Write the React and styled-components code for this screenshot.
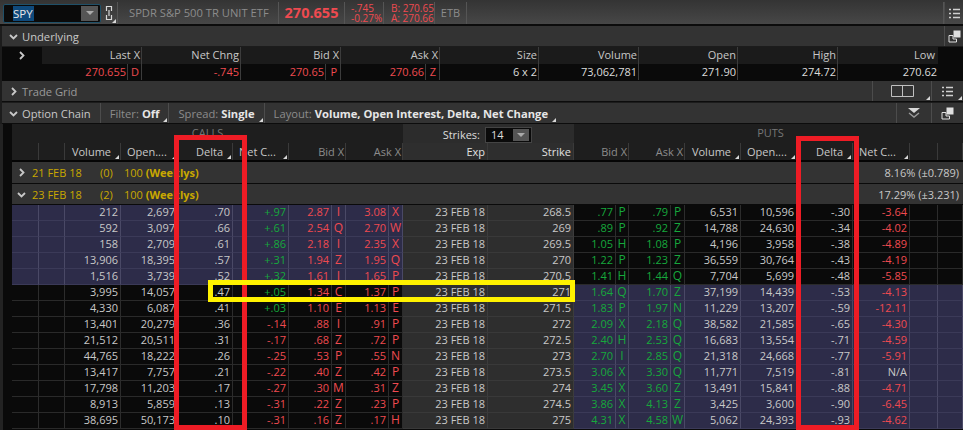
import React from "react";
import styled, { createGlobalStyle } from "styled-components";

const GlobalStyles = createGlobalStyle`
  html, body {
    margin: 0;
    padding: 0;
    background: #1a1a1a;
    overflow: hidden;
  }
  * { box-sizing: border-box; }
`;

const RED = "#ef4a50";
const GREEN = "#16a83c";
const LIGHT = "#c8c8c8";

const Page = styled.div`
  position: relative;
  width: 963px;
  height: 430px;
  overflow: hidden;
  background: #1c1c1c;
  font-family: "Open Sans", "Liberation Sans", sans-serif;
  font-size: 11px;
  color: ${LIGHT};
  padding-left: 2px;
`;

// top symbol bar
const Toolbar = styled.div`
  display: flex;
  align-items: center;
  height: 26px;
  margin-left: -2px;
  padding-top: 2px;
  background: linear-gradient(#343434, #474747);
  border-bottom: 2px solid #0c0c0c;
`;
const SymbolBox = styled.div`
  display: flex;
  align-items: center;
  justify-content: space-between;
  width: 98px;
  height: 19px;
  margin-left: 3px;
  padding: 0 2px 0 9px;
  background: #0a0a0a;
  border: 1px solid #1f5068;
  border-radius: 2px;
`;
const SymbolText = styled.span`
  background: #0f4a7c;
  color: #e8e8e8;
  font-size: 11.5px;
  line-height: 15px;
  padding-right: 1px;
`;
const ComboArrow = styled.span`
  display: flex;
  align-items: center;
  justify-content: center;
  width: 17px;
  height: 15px;
  background: #555;
  &::after {
    content: "";
    border-left: 4px solid transparent;
    border-right: 4px solid transparent;
    border-top: 4px solid #aaa;
  }
`;
const ToolCell = styled.div`
  position: relative;
  display: flex;
  flex-direction: ${(p) => (p.$stack ? "column" : "row")};
  align-items: ${(p) => (p.$stack ? "flex-start" : "center")};
  justify-content: center;
  width: ${(p) => p.$w}px;
  height: 22px;
  padding-left: ${(p) => p.$pad || 0}px;
  border-right: 1px solid #555;
  color: ${(p) => p.$color || "#8c8c8c"};
  font-size: ${(p) => p.$size || 11}px;
  line-height: 10px;
  flex: ${(p) => (p.$grow ? 1 : "none")};
  ${(p) => (p.$left ? "justify-content: flex-start;" : "")}
`;
const LastPrice = styled.span`
  color: ${RED};
  font-size: 14.5px;
  font-weight: 700;
`;
const Corner = styled.span`
  position: absolute;
  right: 1px;
  bottom: 1px;
  width: 0;
  height: 0;
  border-left: 4px solid transparent;
  border-bottom: 4px solid #d8d8d8;
`;

// collapsible section bars
const Bar = styled.div`
  display: flex;
  align-items: center;
  height: ${(p) => p.$h || 20}px;
  background: #333;
  border-bottom: ${(p) => (p.$line ? "1px solid #0c0c0c" : "none")};
  margin-top: ${(p) => p.$mt || 0}px;
  margin-bottom: ${(p) => p.$mb || 0}px;
  color: ${(p) => p.$color || LIGHT};
  font-size: 11.2px;
`;
const Arrow = styled.svg`
  width: 9px;
  height: 9px;
  margin: 0 ${(p) => p.$mr ?? 4}px 0 ${(p) => p.$ml ?? 7}px;
  flex: none;
`;
const BarTitle = styled.span`
  padding-right: 9px;
`;
const BarRight = styled.div`
  display: flex;
  align-items: center;
  margin-left: auto;
  height: 100%;
`;
const BarButton = styled.div`
  position: relative;
  display: flex;
  align-items: center;
  justify-content: center;
  width: ${(p) => p.$w}px;
  height: 100%;
  border-left: 1px solid #4c4c4c;
`;
const BarItem = styled.div`
  position: relative;
  display: flex;
  align-items: center;
  gap: 3px;
  height: 100%;
  padding: 0 9px;
  border-left: 1px solid #4c4c4c;
  color: #8c8c8c;
  font-size: 11.2px;
  b {
    color: #e6e6e6;
    font-weight: 700;
  }
`;

// underlying quote
const QuoteGrid = styled.div`
  display: grid;
  grid-template-columns: 40px 86px 14px 99px 85px 15px 85px 14px 99px 100px 99px 100px 100px 1fr;
  height: 17px;
  background: #0a0a0a;
`;
const QuoteCell = styled.div`
  position: relative;
  grid-column: span ${(p) => p.$span || 1};
  text-align: right;
  height: ${(p) => (p.$head ? 17 : 16)}px;
  line-height: ${(p) => (p.$head ? 15 : 16)}px;
  padding-right: ${(p) => p.$pad ?? 1}px;
  color: ${(p) => p.$color || LIGHT};
  background: ${(p) => (p.$head ? "#1b1b1b" : "transparent")};
  border-right: ${(p) => (p.$noline ? "none" : "1px solid #3c3c3c")};
`;
const QuoteToggle = styled.div`
  grid-row: span 2;
  display: flex;
  align-items: center;
  padding-left: 15px;
`;

// chain
const ChainWrap = styled.div`
  background: #0a0a0a;
  margin-left: -2px;
  padding-left: 9px;
  border-left: 3px solid #232323;
  height: 307px;
`;
const TitleRow = styled.div`
  display: grid;
  grid-template-columns: 391px 171px 1fr;
  height: 19px;
  background: #1e1e1e;
`;
const SideTitle = styled.div`
  text-align: center;
  line-height: 17px;
  color: #777;
  padding-left: ${(p) => p.$pad || 0}px;
`;
const StrikesBox = styled.div`
  display: flex;
  align-items: center;
  justify-content: flex-end;
  gap: 5px;
  padding: 2px 42px 0 0;
  background: #2c2c2c;
  color: #ddd;
`;
const StrikesCombo = styled.div`
  display: flex;
  align-items: center;
  justify-content: space-between;
  flex: none;
  width: 47px;
  height: 16px;
  padding: 0 2px 0 5px;
  background: #0a0a0a;
  border: 1px solid #444;
  color: #ddd;
`;
const StrikesArrow = styled(ComboArrow)`
  width: 16px;
  height: 12px;
`;

const COLUMNS =
  "27px 26px 56px 57px 55px 56px 43px 14px 43px 14px 85px 86px 42px 13px 42px 14px 56px 56px 56px 57px 28px 1fr";

const HeadRow = styled.div`
  display: grid;
  grid-template-columns: ${COLUMNS};
  height: 19px;
  background: #1e1e1e;
  border-bottom: 2px solid #050505;
`;
const HeadCell = styled.div`
  position: relative;
  grid-column: span ${(p) => p.$span || 1};
  text-align: ${(p) => (p.$left ? "left" : "right")};
  line-height: 17px;
  padding: ${(p) => (p.$left ? "0 0 0 6px" : `0 ${p.$pad ?? 2}px 0 0`)};
  color: ${(p) => p.$color || "#c8c8c8"};
  background: ${(p) => p.$bg || "transparent"};
  border-right: 1px solid #3a3a3a;
  white-space: nowrap;
`;
const GroupRow = styled.div`
  display: flex;
  align-items: center;
  height: ${(p) => p.$h}px;
  margin-bottom: 1px;
  background: #333;
  color: #c9a800;
`;
const GroupDate = styled.span`
  width: 68px;
`;
const GroupCount = styled.span`
  width: 24px;
`;
const GroupRight = styled.span`
  margin-left: auto;
  padding-right: 4px;
  color: ${LIGHT};
`;
const DataRow = styled.div`
  display: grid;
  grid-template-columns: ${COLUMNS};
  height: 16px;
`;
const Cell = styled.div`
  text-align: ${(p) => (p.$center ? "center" : "right")};
  font-size: ${(p) => (p.$center ? 12 : 11)}px;
  line-height: 14px;
  padding-right: ${(p) => (p.$center ? 0 : 2)}px;
  color: ${(p) => p.$color || LIGHT};
  background: ${(p) => (p.$mid ? "#2e2e2e" : p.$itm ? "#2d2c49" : "#0a0a0a")};
  border-right: 1px solid ${(p) => (p.$mid ? "#3c3c3c" : p.$itm ? "#4a4966" : "#2c2c2c")};
  border-bottom: 1px solid ${(p) => (p.$mid ? "#393939" : p.$itm ? "#3b3a58" : "#2a2a2a")};
  white-space: nowrap;
`;

// hand drawn marks over the screenshot
const Mark = styled.div`
  position: absolute;
  left: ${(p) => p.$x}px;
  top: ${(p) => p.$y}px;
  width: ${(p) => p.$w}px;
  height: ${(p) => p.$h}px;
  border: ${(p) => p.$t}px solid ${(p) => p.$c};
  pointer-events: none;
`;

const Chevron = ({ open, ml, mr }) => (
  <Arrow viewBox="0 0 9 9" $ml={ml} $mr={mr}>
    <path
      d={open ? "M1 3l3.5 3.5L8 3" : "M3 1l3.5 3.5L3 8"}
      fill="none"
      stroke="#c8c8c8"
      strokeWidth="1.8"
    />
  </Arrow>
);

const ListIcon = () => (
  <svg width="11" height="11" viewBox="0 0 11 11">
    <path
      d="M0 1.5h2M4 1.5h7M0 5.5h2M4 5.5h7M0 9.5h2M4 9.5h7"
      stroke="#d0d0d0"
      strokeWidth="1.4"
    />
  </svg>
);

const DetachIcon = () => (
  <svg width="13" height="13" viewBox="0 0 13 13">
    <path d="M1 5.5h4V9h3.5v3H1z" fill="none" stroke="#e0e0e0" strokeWidth="1" />
    <rect x="5.5" y="0.5" width="7" height="7" fill="#e0e0e0" />
  </svg>
);

const LinkIcon = () => (
  <svg width="8" height="16" viewBox="0 0 8 16">
    <path
      d="M1.5 6V1.5h5V6M1.5 10v4.5h5V10M4 5v6"
      fill="none"
      stroke="#d8d8d8"
      strokeWidth="1.2"
    />
  </svg>
);

const SplitIcon = () => (
  <svg width="23" height="12" viewBox="0 0 23 12">
    <path d="M.5.5h22v11H.5zM11.5.5v11" fill="none" stroke="#c0c0c0" strokeWidth="1" />
  </svg>
);

const DoubleDown = () => (
  <svg width="12" height="10" viewBox="0 0 12 10">
    <path d="M0 0h12L6 5z" fill="#d8d8d8" />
    <path d="M1 5l5 4 5-4" fill="none" stroke="#9a9a9a" strokeWidth="1.4" />
  </svg>
);

// vol, oi, delta, net, bid, x, ask, x, strike, bid, x, ask, x, vol, oi, delta, net
const rows = [
  ["212", "2,697", ".70", "+.97", "2.87", "I", "3.08", "X", "268.5", ".77", "P", ".79", "P", "6,531", "10,596", "-.30", "-3.64"],
  ["592", "3,097", ".66", "+.61", "2.54", "Q", "2.70", "W", "269", ".89", "P", ".92", "Z", "14,788", "24,630", "-.34", "-4.02"],
  ["158", "2,709", ".61", "+.86", "2.18", "I", "2.35", "X", "269.5", "1.05", "H", "1.08", "P", "4,196", "3,958", "-.38", "-4.89"],
  ["13,906", "18,395", ".57", "+.31", "1.94", "Z", "1.95", "Q", "270", "1.22", "P", "1.23", "Z", "36,559", "30,764", "-.43", "-4.19"],
  ["1,516", "3,739", ".52", "+.32", "1.61", "I", "1.65", "P", "270.5", "1.41", "H", "1.44", "Q", "7,704", "5,699", "-.48", "-5.85"],
  ["3,995", "14,057", ".47", "+.05", "1.34", "C", "1.37", "P", "271", "1.64", "Q", "1.70", "Z", "37,199", "14,439", "-.53", "-4.13"],
  ["4,330", "6,087", ".41", "+.03", "1.10", "E", "1.13", "E", "271.5", "1.83", "P", "1.97", "N", "11,229", "13,207", "-.59", "-12.11"],
  ["13,401", "20,279", ".36", "-.14", ".88", "I", ".91", "P", "272", "2.09", "X", "2.18", "Q", "38,582", "21,585", "-.65", "-4.30"],
  ["21,512", "20,511", ".31", "-.17", ".68", "Z", ".72", "P", "272.5", "2.40", "H", "2.53", "Q", "16,683", "13,554", "-.71", "-4.59"],
  ["44,765", "18,222", ".26", "-.25", ".53", "P", ".55", "N", "273", "2.70", "I", "2.85", "Q", "21,318", "24,668", "-.77", "-5.91"],
  ["13,417", "7,757", ".21", "-.22", ".40", "Z", ".42", "P", "273.5", "3.06", "X", "3.30", "Q", "11,771", "7,519", "-.81", "N/A"],
  ["17,798", "11,203", ".17", "-.27", ".30", "M", ".31", "Z", "274", "3.45", "X", "3.60", "Z", "13,491", "15,841", "-.88", "-4.71"],
  ["8,913", "5,859", ".13", "-.31", ".22", "Z", ".23", "P", "274.5", "3.86", "X", "4.13", "Z", "3,425", "3,600", "-.90", "-6.45"],
  ["38,695", "50,173", ".10", "-.31", ".16", "Z", ".17", "H", "275", "4.31", "X", "4.58", "W", "5,062", "24,393", "-.93", "-4.62"],
];

const OptionRow = ({ row, index }) => {
  const [vol, oi, delta, net, bid, bx, ask, ax, strike, pBid, pbx, pAsk, pax, pVol, pOi, pDelta, pNet] = row;
  const call = index < 5;
  const put = index >= 5;
  return (
    <DataRow>
      <Cell $itm={call} />
      <Cell $itm={call} />
      <Cell $itm={call}>{vol}</Cell>
      <Cell $itm={call}>{oi}</Cell>
      <Cell $itm={call}>{delta}</Cell>
      <Cell $itm={call} $color={net[0] === "+" ? GREEN : RED}>{net}</Cell>
      <Cell $itm={call} $color={RED}>{bid}</Cell>
      <Cell $itm={call} $color={RED} $center>{bx}</Cell>
      <Cell $itm={call} $color={RED}>{ask}</Cell>
      <Cell $itm={call} $color={RED} $center>{ax}</Cell>
      <Cell $mid>23 FEB 18</Cell>
      <Cell $mid>{strike}</Cell>
      <Cell $itm={put} $color={GREEN}>{pBid}</Cell>
      <Cell $itm={put} $color={GREEN} $center>{pbx}</Cell>
      <Cell $itm={put} $color={GREEN}>{pAsk}</Cell>
      <Cell $itm={put} $color={GREEN} $center>{pax}</Cell>
      <Cell $itm={put}>{pVol}</Cell>
      <Cell $itm={put}>{pOi}</Cell>
      <Cell $itm={put}>{pDelta}</Cell>
      <Cell $itm={put} $color={pNet === "N/A" ? LIGHT : RED}>{pNet}</Cell>
      <Cell $itm={put} />
      <Cell $itm={put} />
    </DataRow>
  );
};

const Sortable = ({ children, left }) => (
  <HeadCell $left={left} $pad={9}>
    {children}
    <Corner />
  </HeadCell>
);

export default function App() {
  return (
    <Page>
      <GlobalStyles />
      <Toolbar>
        <SymbolBox>
          <SymbolText>SPY</SymbolText>
          <ComboArrow />
        </SymbolBox>
        <ToolCell $w={17}>
          <LinkIcon />
          <Corner />
        </ToolCell>
        <ToolCell $w={161} $pad={11} $left $size={11.2}>SPDR S&amp;P 500 TR UNIT ETF</ToolCell>
        <ToolCell $w={66}><LastPrice>270.655</LastPrice></ToolCell>
        <ToolCell $w={39} $stack $pad={6} $color={RED} $size={10}>
          <span>-.745</span>
          <span>-0.27%</span>
        </ToolCell>
        <ToolCell $w={51} $stack $pad={7} $color={RED} $size={10}>
          <span>B: 270.65</span>
          <span>A: 270.66</span>
        </ToolCell>
        <ToolCell $w={32}>ETB</ToolCell>
        <ToolCell $grow />
        <BarButton $w={19}><ListIcon /></BarButton>
      </Toolbar>

      <Bar $h={20} $mb={1}>
        <Chevron open />
        Underlying
        <BarRight>
          <BarButton $w={19}><DetachIcon /></BarButton>
        </BarRight>
      </Bar>
      <QuoteGrid>
        <QuoteToggle><Chevron ml={0} /></QuoteToggle>
        <QuoteCell $head $span={2}>Last X</QuoteCell>
        <QuoteCell $head>Net Chng</QuoteCell>
        <QuoteCell $head $span={2}>Bid X</QuoteCell>
        <QuoteCell $head $span={2}>Ask X</QuoteCell>
        <QuoteCell $head>Size</QuoteCell>
        <QuoteCell $head>Volume</QuoteCell>
        <QuoteCell $head>Open</QuoteCell>
        <QuoteCell $head>High</QuoteCell>
        <QuoteCell $head $noline $pad={3}>Low</QuoteCell>
      </QuoteGrid>
      <QuoteGrid>
        <span />
        <QuoteCell $color={RED}>270.655</QuoteCell>
        <QuoteCell $color={RED} $pad={2}>D</QuoteCell>
        <QuoteCell $color={RED}>-.745</QuoteCell>
        <QuoteCell $color={RED}>270.65</QuoteCell>
        <QuoteCell $color={RED} $pad={3}>P</QuoteCell>
        <QuoteCell $color={RED}>270.66</QuoteCell>
        <QuoteCell $color={RED} $pad={3}>Z</QuoteCell>
        <QuoteCell $color="#dcdcdc">6 x 2</QuoteCell>
        <QuoteCell $color="#dcdcdc">73,062,781</QuoteCell>
        <QuoteCell $color="#dcdcdc">271.90</QuoteCell>
        <QuoteCell $color="#dcdcdc">274.72</QuoteCell>
        <QuoteCell $color="#dcdcdc" $noline>270.62</QuoteCell>
      </QuoteGrid>

      <Bar $h={21} $line $color="#9a9a9a">
        <Chevron />
        Trade Grid
        <BarRight>
          <BarButton $w={59}>
            <SplitIcon />
            <Corner />
          </BarButton>
          <BarButton $w={32}>
            <ListIcon />
            <Corner />
          </BarButton>
        </BarRight>
      </Bar>
      <Bar $h={21} $line $mt={1}>
        <Chevron open />
        <BarTitle>Option Chain</BarTitle>
        <BarItem>
          Filter: <b>Off</b>
          <Corner />
        </BarItem>
        <BarItem>
          Spread: <b>Single</b>
          <Corner />
        </BarItem>
        <BarItem>
          Layout: <b>Volume, Open Interest, Delta, Net Change</b>
          <Corner />
        </BarItem>
        <BarRight>
          <BarButton $w={35}><DoubleDown /></BarButton>
          <BarButton $w={32}><DetachIcon /></BarButton>
        </BarRight>
      </Bar>

      <ChainWrap>
        <TitleRow>
          <SideTitle>CALLS</SideTitle>
          <StrikesBox>
            Strikes:
            <StrikesCombo>
              14
              <StrikesArrow />
            </StrikesCombo>
          </StrikesBox>
          <SideTitle $pad={4}>PUTS</SideTitle>
        </TitleRow>
        <HeadRow>
          <HeadCell />
          <HeadCell />
          <Sortable>Volume</Sortable>
          <Sortable left>Open....</Sortable>
          <Sortable>Delta</Sortable>
          <Sortable left>Net C...</Sortable>
          <HeadCell $span={2} $color="#8c8c8c" $pad={1}>Bid X</HeadCell>
          <HeadCell $span={2} $color="#8c8c8c" $pad={1}>Ask X</HeadCell>
          <HeadCell $bg="#2e2e2e" $color="#e0e0e0">Exp</HeadCell>
          <HeadCell $bg="#2e2e2e" $color="#e0e0e0">Strike</HeadCell>
          <HeadCell $span={2} $color="#8c8c8c" $pad={1}>Bid X</HeadCell>
          <HeadCell $span={2} $color="#8c8c8c" $pad={1}>Ask X</HeadCell>
          <Sortable>Volume</Sortable>
          <Sortable left>Open....</Sortable>
          <Sortable>Delta</Sortable>
          <Sortable left>Net C...</Sortable>
          <HeadCell />
          <HeadCell />
        </HeadRow>
        <GroupRow $h={21}>
          <Chevron ml={5} mr={6} />
          <GroupDate>21 FEB 18</GroupDate>
          <GroupCount>(0)</GroupCount>
          <span>100 <b>(Weeklys)</b></span>
          <GroupRight>8.16% (±0.789)</GroupRight>
        </GroupRow>
        <GroupRow $h={20}>
          <Chevron open ml={5} mr={6} />
          <GroupDate>23 FEB 18</GroupDate>
          <GroupCount>(2)</GroupCount>
          <span>100 <b>(Weeklys)</b></span>
          <GroupRight>17.29% (±3.231)</GroupRight>
        </GroupRow>
        {rows.map((row, i) => (
          <OptionRow key={row[8]} row={row} index={i} />
        ))}
      </ChainWrap>

      <Mark $x={174} $y={135} $w={73} $h={295} $t={5} $c="#ee1c25" />
      <Mark $x={796} $y={136} $w={63} $h={294} $t={5} $c="#ee1c25" />
      <Mark $x={208} $y={280} $w={367} $h={22} $t={5} $c="#fff200" />
    </Page>
  );
}
